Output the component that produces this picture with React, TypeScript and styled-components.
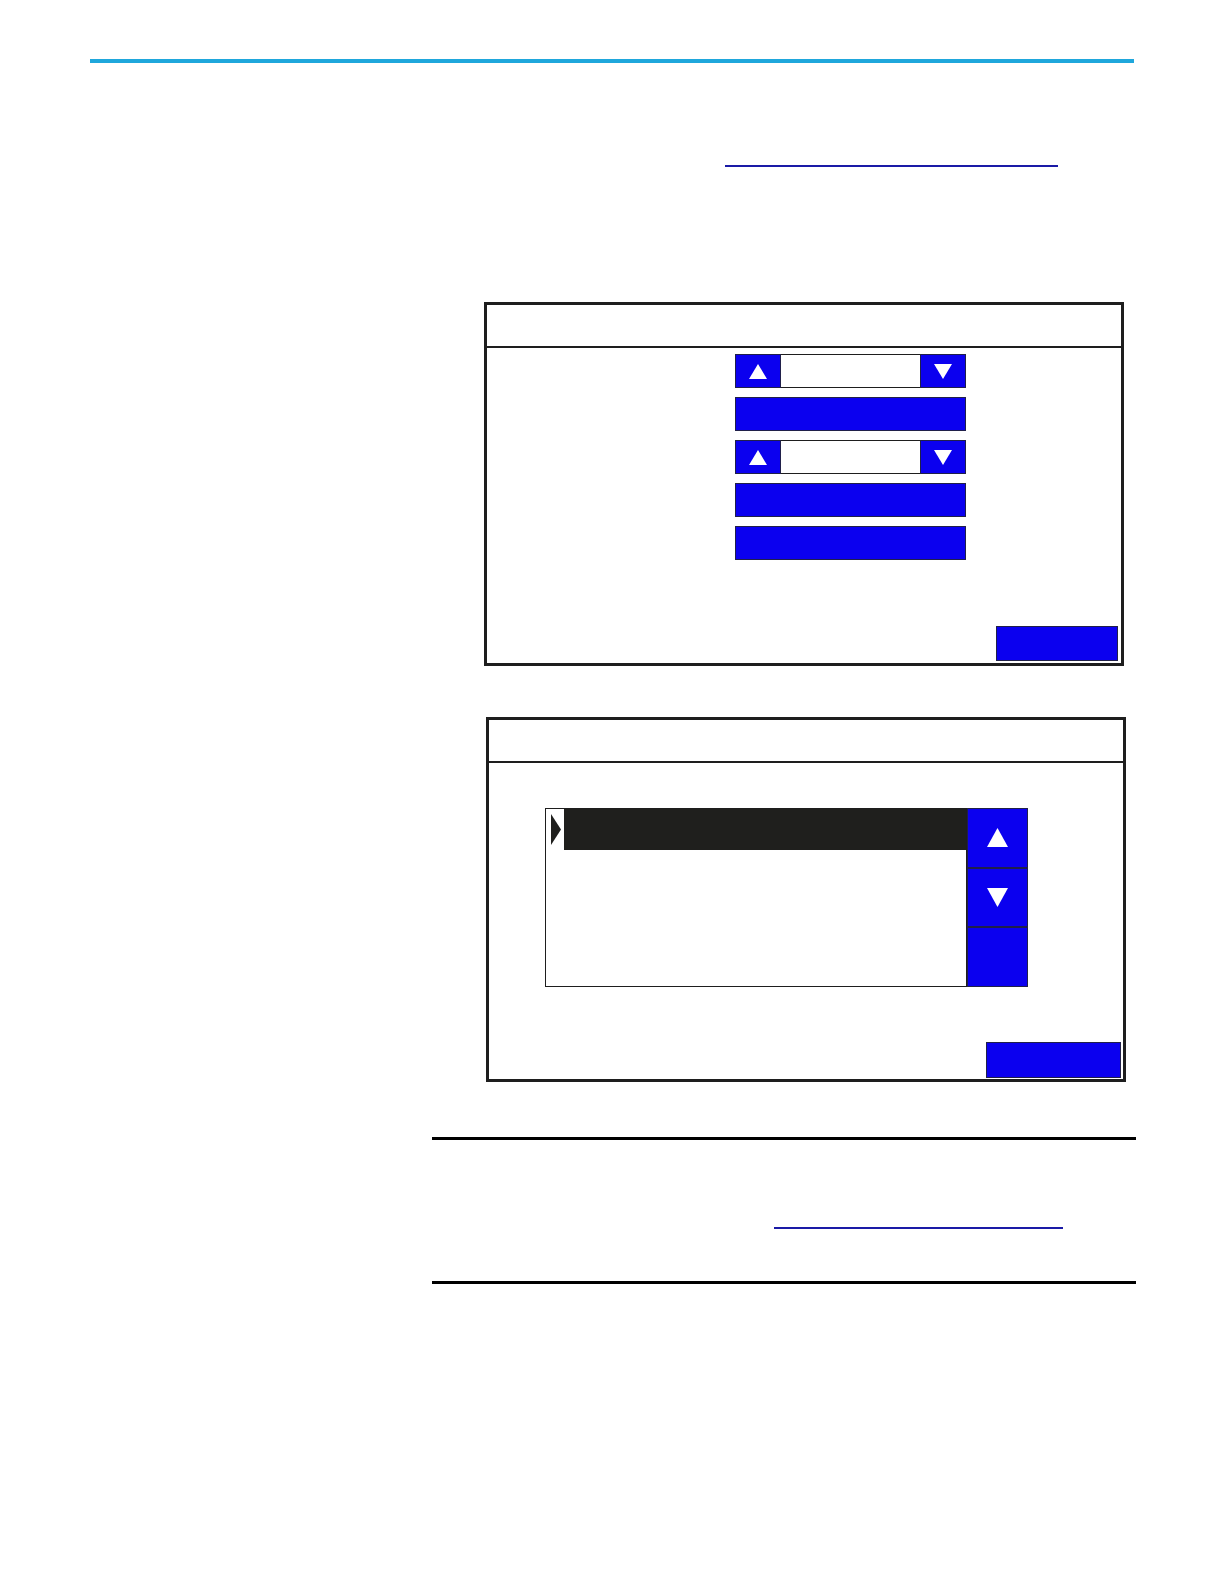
import React from 'react';
import styled, { createGlobalStyle } from 'styled-components';

const blue = '#0b00ef';
const ink = '#1e1e1e';
const edge = '#20204a';

const GlobalStyle = createGlobalStyle`
  html, body {
    margin: 0;
    padding: 0;
    background: #ffffff;
    font-family: "Liberation Sans", Arial, sans-serif;
  }
`;

const Page = styled.div`
  width: 1224px;
  min-height: 1584px;
  box-sizing: border-box;
  padding: 59px 0 0 90px;
`;

const TopRule = styled.div`
  width: 1044px;
  height: 4px;
  background: #1fa7dc;
`;

const Column = styled.div`
  margin-left: 342px;
  width: 704px;
  display: flex;
  flex-direction: column;
`;

const LinkLine = styled.a<{ $top: number; $left: number; $width: number }>`
  display: block;
  margin-top: ${({ $top }) => $top}px;
  margin-left: ${({ $left }) => $left}px;
  width: ${({ $width }) => $width}px;
  border-top: 2px solid #1a1aa6;
`;

const Panel = styled.div<{ $top: number; $left: number; $w: number; $h: number }>`
  margin-top: ${({ $top }) => $top}px;
  margin-left: ${({ $left }) => $left}px;
  width: ${({ $w }) => $w}px;
  height: ${({ $h }) => $h}px;
  box-sizing: border-box;
  border: 3px solid ${ink};
  display: flex;
  flex-direction: column;
`;

const PanelHeader = styled.div`
  height: 41px;
  flex-shrink: 0;
  border-bottom: 2px solid ${ink};
`;

const PanelBody = styled.div`
  flex: 1;
  display: flex;
  flex-direction: column;
`;

const Controls = styled.div`
  margin: 6px 0 0 248px;
  width: 231px;
  display: flex;
  flex-direction: column;
  gap: 8.6px;
`;

const Spinner = styled.div`
  height: 34.4px;
  display: flex;
`;

const SpinButton = styled.div`
  width: 46px;
  box-sizing: border-box;
  background: ${blue};
  border: 1px solid ${edge};
  display: flex;
  align-items: center;
  justify-content: center;
`;

const SpinField = styled.div`
  flex: 1;
  box-sizing: border-box;
  background: #fff;
  border-top: 1px solid ${ink};
  border-bottom: 1px solid ${ink};
`;

const WideButton = styled.div`
  height: 34.4px;
  box-sizing: border-box;
  background: ${blue};
  border: 1px solid ${edge};
`;

const Footer = styled.div`
  margin-top: auto;
  display: flex;
  justify-content: flex-end;
`;

const CornerButton = styled.div<{ $w: number; $h: number; $right: number; $bottom: number }>`
  width: ${({ $w }) => $w}px;
  height: ${({ $h }) => $h}px;
  margin: 0 ${({ $right }) => $right}px ${({ $bottom }) => $bottom}px 0;
  box-sizing: border-box;
  background: ${blue};
  border: 1px solid ${edge};
`;

const ListArea = styled.div`
  margin: 45px 0 0 56px;
  display: flex;
  height: 179px;
`;

const ListBox = styled.div`
  width: 422px;
  box-sizing: border-box;
  border: 1px solid ${ink};
  background: #fff;
`;

const ListRow = styled.div`
  height: 41px;
  display: flex;
`;

const Marker = styled.div`
  width: 18px;
  flex-shrink: 0;
  display: flex;
  align-items: flex-start;
  padding: 5px 0 0 5px;
  box-sizing: border-box;
`;

const RowFill = styled.div<{ $selected: boolean }>`
  flex: 1;
  background: ${({ $selected }) => ($selected ? '#1f1f1d' : 'transparent')};
`;

const ScrollBar = styled.div`
  width: 61px;
  box-sizing: border-box;
  background: ${blue};
  border: 1px solid ${edge};
  display: flex;
  flex-direction: column;
`;

const ScrollCell = styled.div`
  flex: 1;
  display: flex;
  align-items: center;
  justify-content: center;
  & + & {
    border-top: 2px solid ${edge};
  }
`;

const NoteRule = styled.div<{ $top: number }>`
  margin-top: ${({ $top }) => $top}px;
  width: 704px;
  height: 3px;
  background: #000;
`;

const Tri = ({ dir, w, h, fill = '#fff' }: { dir: 'up' | 'down' | 'right'; w: number; h: number; fill?: string }) => {
  const pts =
    dir === 'up'
      ? `${w / 2},0 ${w},${h} 0,${h}`
      : dir === 'down'
      ? `0,0 ${w},0 ${w / 2},${h}`
      : `0,0 ${w},${h / 2} 0,${h}`;
  return (
    <svg width={w} height={h} viewBox={`0 0 ${w} ${h}`}>
      <polygon points={pts} fill={fill} />
    </svg>
  );
};

const NumericSpinner = () => (
  <Spinner>
    <SpinButton>
      <Tri dir="up" w={18} h={15} />
    </SpinButton>
    <SpinField />
    <SpinButton>
      <Tri dir="down" w={18} h={15} />
    </SpinButton>
  </Spinner>
);

export default function App() {
  return (
    <Page>
      <GlobalStyle />
      <TopRule />
      <Column>
        <LinkLine $top={102} $left={293} $width={333} />

        <Panel $top={135} $left={52} $w={640} $h={364}>
          <PanelHeader />
          <PanelBody>
            <Controls>
              <NumericSpinner />
              <WideButton />
              <NumericSpinner />
              <WideButton />
              <WideButton />
            </Controls>
            <Footer>
              <CornerButton $w={122} $h={35} $right={3} $bottom={2} />
            </Footer>
          </PanelBody>
        </Panel>

        <Panel $top={51} $left={54} $w={640} $h={365}>
          <PanelHeader />
          <PanelBody>
            <ListArea>
              <ListBox>
                <ListRow>
                  <Marker>
                    <Tri dir="right" w={10} h={31} fill="#1f1f1d" />
                  </Marker>
                  <RowFill $selected />
                </ListRow>
              </ListBox>
              <ScrollBar>
                <ScrollCell>
                  <Tri dir="up" w={21} h={19} />
                </ScrollCell>
                <ScrollCell>
                  <Tri dir="down" w={21} h={19} />
                </ScrollCell>
                <ScrollCell />
              </ScrollBar>
            </ListArea>
            <Footer>
              <CornerButton $w={135} $h={36} $right={2} $bottom={1} />
            </Footer>
          </PanelBody>
        </Panel>

        <NoteRule $top={55} />
        <LinkLine $top={87} $left={342} $width={289} />
        <NoteRule $top={52} />
      </Column>
    </Page>
  );
}
